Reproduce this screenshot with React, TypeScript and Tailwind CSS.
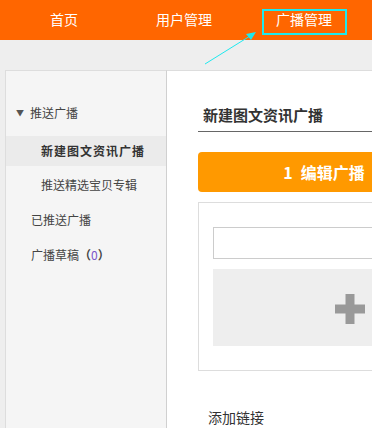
import React from "react";

const font = { fontFamily: '"Noto Sans CJK SC", "Noto Sans", sans-serif' };

export default function App() {
  return (
    <div style={font} className="relative w-[372px] h-[428px] overflow-hidden bg-[#eeeeee]">
      {/* Top nav */}
      <div className="flex h-10 bg-[#ff6600] pl-1 text-[14px] text-white">
        <div className="w-[120px] text-center leading-[38px]">首页</div>
        <div className="w-[120px] text-center leading-[38px]">用户管理</div>
        <div className="w-[120px] text-center leading-[38px]">广播管理</div>
      </div>

      {/* annotation */}
      <div className="absolute left-[262px] top-[9px] w-[85px] h-[26px] border-2 border-[#1ee9ee]" />
      <svg className="absolute left-0 top-0" width="372" height="80">
        <line x1="205" y1="64" x2="250" y2="36" stroke="#1ee9ee" strokeWidth="1" />
        <polygon points="256,32 246,34 251,40" fill="#1ee9ee" />
      </svg>

      <div className="flex pt-[30px] pl-[5px]">
        {/* Sidebar */}
        <div className="w-[162px] h-[400px] shrink-0 bg-[#f5f5f5] border-l border-t border-r border-[#dddddd] border-r-[#d0d0d0] pt-[27px] text-[12px] text-[#444]">
          <div className="flex h-[30px] items-center pl-[10px]">
            <span className="mr-[6px] text-[8px] text-[#555]">▼</span>
            <span>推送广播</span>
          </div>
          <div className="mt-[8px] h-[30px] bg-[#ebebeb] pl-[35px] leading-[30px] font-bold text-[12px] tracking-[1px] text-[#333]">
            新建图文资讯广播
          </div>
          <div className="mt-[4px] h-[30px] pl-[35px] leading-[30px]">推送精选宝贝专辑</div>
          <div className="mt-[5px] h-[30px] pl-[25px] leading-[30px]">已推送广播</div>
          <div className="mt-[5px] h-[30px] pl-[25px] leading-[30px]">
            广播草稿<span className="font-bold">（</span>
            <span className="text-[#7b52c8]">0</span>
            <span className="font-bold">）</span>
          </div>
        </div>

        {/* Main */}
        <div className="w-[400px] shrink-0 h-[400px] bg-white border-t border-[#dddddd] pl-[31px] pt-[34px]">
          <div className="border-b border-[#666666] pb-[6px] pl-[5px] text-[15px] font-bold leading-[20px] text-[#333]">
            新建图文资讯广播
          </div>
          <div className="mt-[20px] h-10 w-[252px] rounded-l-[4px] bg-[#ff9900] text-center text-[16px] font-bold leading-10 text-white">
            <span className="mr-[8px]">1</span>编辑广播
          </div>
          <div className="mt-[10px] w-[304px] border border-[#dddddd] px-[14px] pt-[24px] pb-[24px]">
            <div className="h-[32px] border border-[#cccccc] bg-white" />
            <div className="mt-[10px] flex h-[77px] items-center justify-center bg-[#eeeeee]">
              <svg width="30" height="30" viewBox="0 0 30 30" className="mt-[3px]">
                <rect x="10.5" y="0" width="9" height="30" fill="#999999" />
                <rect x="0" y="10.5" width="30" height="9" fill="#999999" />
              </svg>
            </div>
          </div>
          <div className="mt-[36px] pl-[10px] text-[14px] leading-[20px] text-[#333]">添加链接</div>
        </div>
      </div>
    </div>
  );
}
